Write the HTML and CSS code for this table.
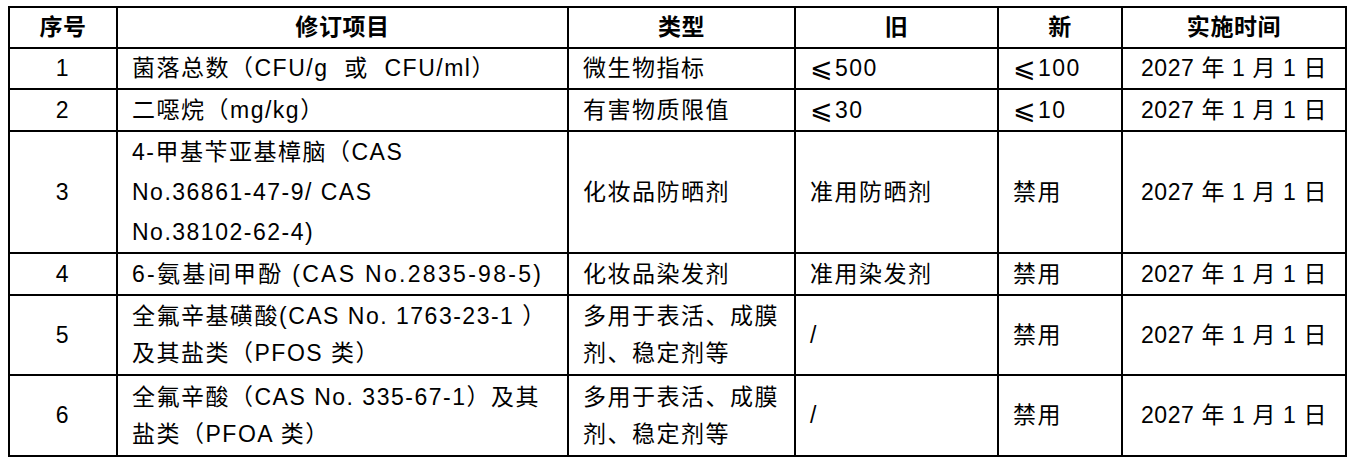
FILE: index.html
```html
<!DOCTYPE html>
<html lang="zh-CN">
<head>
<meta charset="utf-8">
<title>修订项目</title>
<link rel="stylesheet" href="styles.css">
</head>
<body>
<table class="rev-table">
  <colgroup>
    <col class="c-no">
    <col class="c-item">
    <col class="c-type">
    <col class="c-old">
    <col class="c-new">
    <col class="c-date">
  </colgroup>
  <thead>
    <tr class="r-head">
      <th>序号</th>
      <th>修订项目</th>
      <th>类型</th>
      <th>旧</th>
      <th>新</th>
      <th>实施时间</th>
    </tr>
  </thead>
  <tbody>
    <tr class="r-1">
      <td class="num">1</td>
      <td>菌落总数（CFU/g&nbsp; 或&nbsp; CFU/ml）</td>
      <td>微生物指标</td>
      <td><span class="le">⩽</span>500</td>
      <td><span class="le">⩽</span>100</td>
      <td class="date">2027 年 1 月 1 日</td>
    </tr>
    <tr class="r-2">
      <td class="num">2</td>
      <td>二噁烷（mg/kg）</td>
      <td>有害物质限值</td>
      <td><span class="le">⩽</span>30</td>
      <td><span class="le">⩽</span>10</td>
      <td class="date">2027 年 1 月 1 日</td>
    </tr>
    <tr class="r-3">
      <td class="num">3</td>
      <td class="tall">4-甲基苄亚基樟脑（CAS<br>No.36861-47-9/ CAS<br>No.38102-62-4)</td>
      <td>化妆品防晒剂</td>
      <td>准用防晒剂</td>
      <td>禁用</td>
      <td class="date">2027 年 1 月 1 日</td>
    </tr>
    <tr class="r-4">
      <td class="num">4</td>
      <td class="wide">6-氨基间甲酚 (CAS No.2835-98-5)</td>
      <td>化妆品染发剂</td>
      <td>准用染发剂</td>
      <td>禁用</td>
      <td class="date">2027 年 1 月 1 日</td>
    </tr>
    <tr class="r-5">
      <td class="num">5</td>
      <td>全氟辛基磺酸(CAS No. 1763-23-1 ）<br>及其盐类（PFOS 类）</td>
      <td>多用于表活、成膜<br>剂、稳定剂等</td>
      <td>/</td>
      <td>禁用</td>
      <td class="date">2027 年 1 月 1 日</td>
    </tr>
    <tr class="r-6">
      <td class="num">6</td>
      <td>全氟辛酸（CAS No. 335-67-1）及其<br>盐类（PFOA 类）</td>
      <td>多用于表活、成膜<br>剂、稳定剂等</td>
      <td>/</td>
      <td>禁用</td>
      <td class="date">2027 年 1 月 1 日</td>
    </tr>
  </tbody>
</table>
</body>
</html>
```

FILE: styles.css
```css
html, body {
  margin: 0;
  padding: 0;
  background: #ffffff;
}

body {
  padding: 6px 0 0 8px;
  font-family: "Liberation Sans", "Noto Sans CJK SC", sans-serif;
  color: #000000;
}

.rev-table {
  border-collapse: collapse;
  table-layout: fixed;
  width: 1339px;
  font-size: 23px;
  letter-spacing: 1.5px;
}

.c-no { width: 108px; }
.c-item { width: 451px; }
.c-type { width: 227px; }
.c-old { width: 203px; }
.c-new { width: 124px; }
.c-date { width: 224px; }

.rev-table th,
.rev-table td {
  border: 2px solid #000000;
  padding: 0 2px 0 14px;
  vertical-align: middle;
  white-space: nowrap;
  line-height: 37px;
  text-align: left;
}

.rev-table th {
  font-weight: bold;
  text-align: center;
  padding: 0;
  letter-spacing: 0.6px;
}

.rev-table td.num {
  text-align: center;
  padding: 0;
}

.rev-table td.date {
  text-align: center;
  padding: 0;
  letter-spacing: 0.6px;
}

.rev-table td.tall {
  line-height: 40px;
}

.rev-table td.wide {
  letter-spacing: 2.3px;
}

.le {
  font-family: "DejaVu Sans", "Noto Sans CJK SC", sans-serif;
  font-size: 27px;
  font-weight: 300;
  line-height: 0;
  letter-spacing: 0;
  vertical-align: -1px;
  margin-right: 2px;
}

.r-head { height: 41px; }
.r-1 { height: 41px; }
.r-2 { height: 42px; }
.r-3 { height: 121px; }
.r-4 { height: 42px; }
.r-5 { height: 80px; }
.r-6 { height: 81px; }
```
